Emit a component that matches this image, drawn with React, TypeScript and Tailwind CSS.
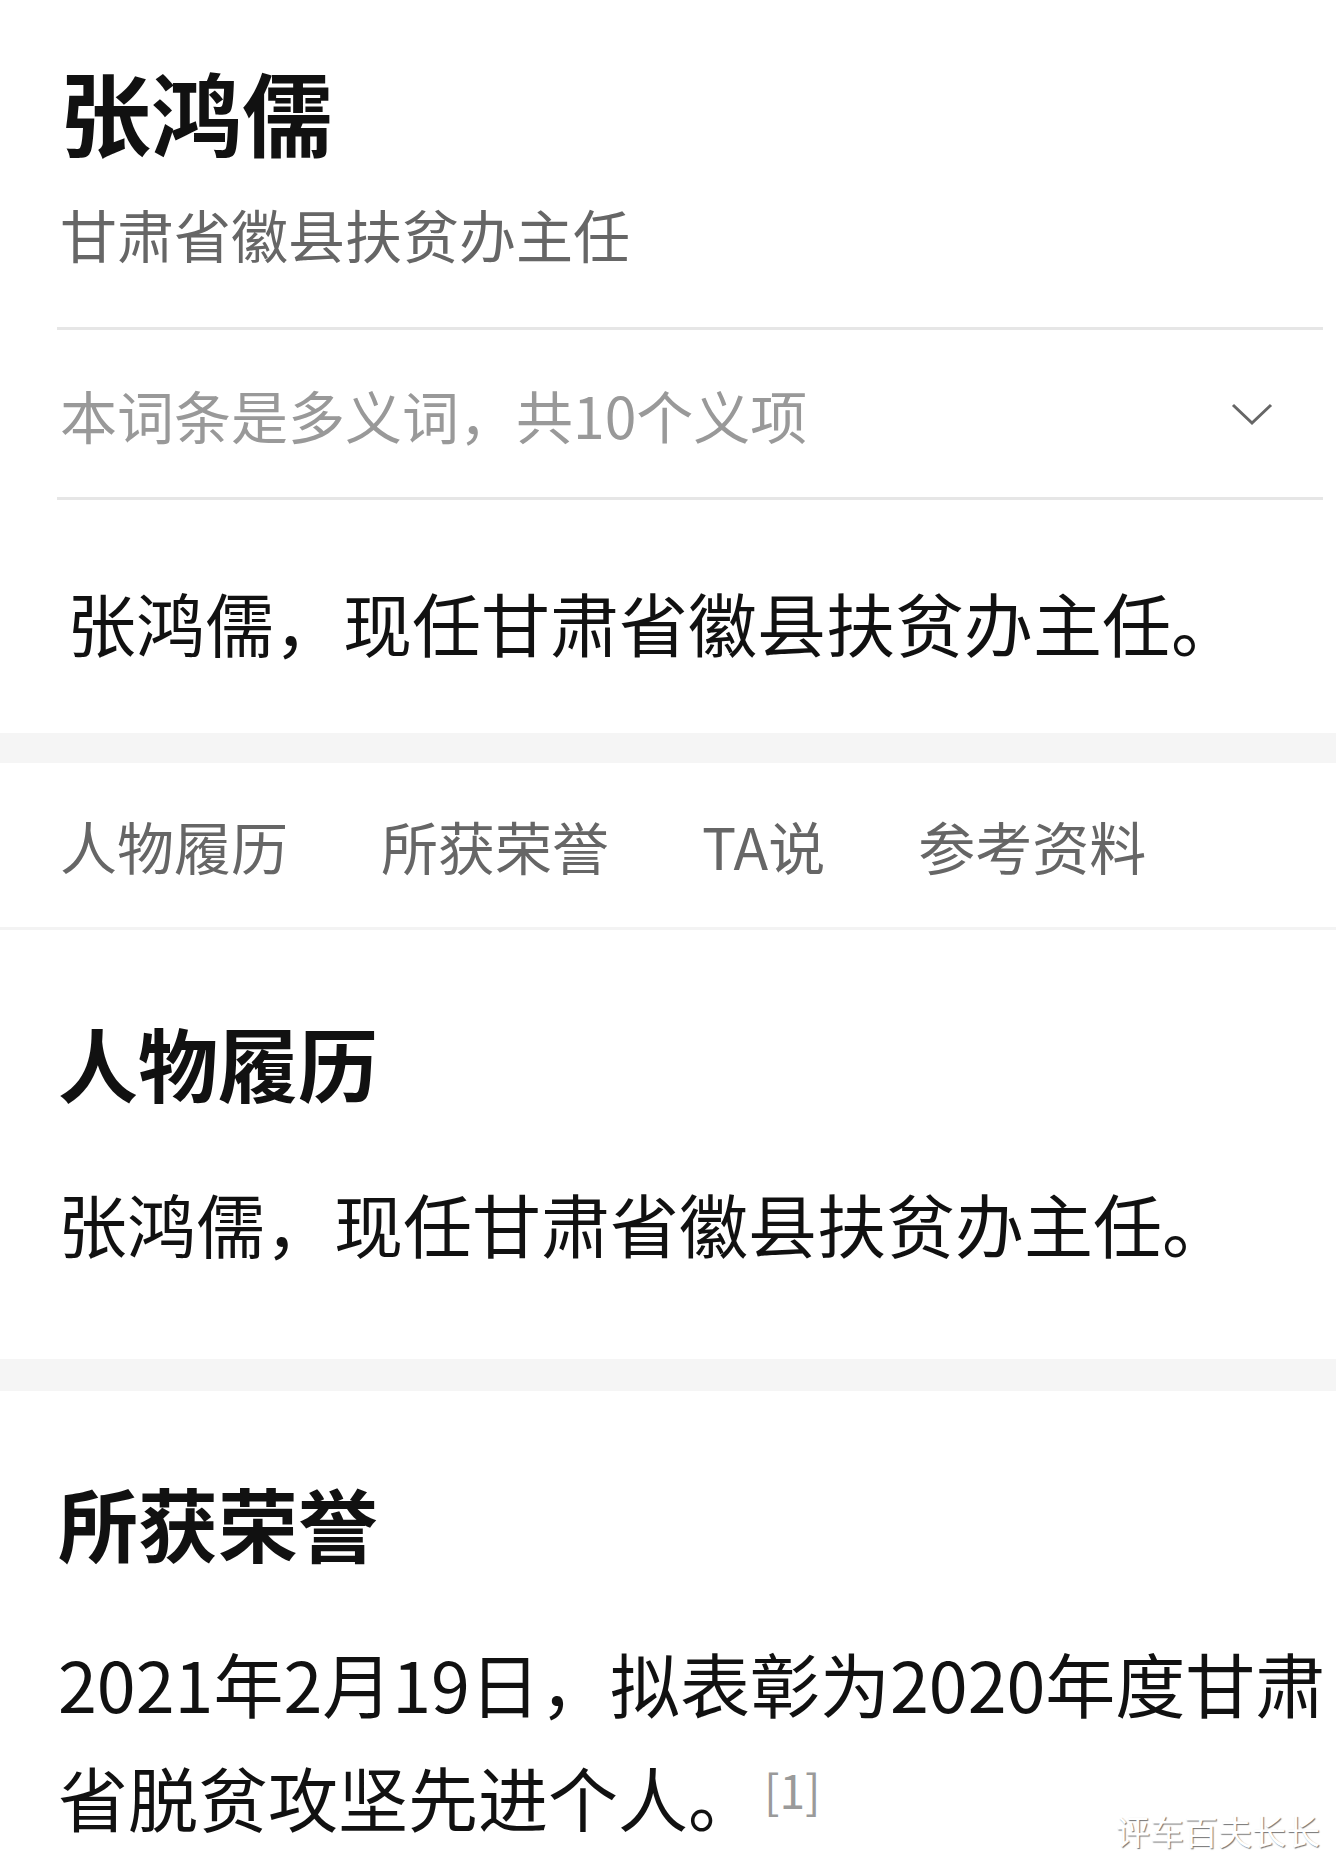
const FONT = "font-['Noto_Sans_CJK_SC','Noto_Sans',sans-serif]";

const TABS = ["人物履历", "所获荣誉", "TA说", "参考资料"];

function Chevron() {
  return (
    <svg width="42" height="24" viewBox="0 0 42 24" fill="none" className="shrink-0">
      <path d="M2 3 L21 21 L40 3" stroke="#666" strokeWidth="3" strokeLinejoin="miter" />
    </svg>
  );
}

function Band({ h }: { h: string }) {
  return <div className={`w-full bg-[#f5f5f5] ${h}`} />;
}

export default function App() {
  return (
    <div className={`relative w-[1336px] h-[1869px] overflow-hidden bg-white text-black ${FONT}`}>
      {/* header */}
      <section className="pl-[57px] pr-[13px]">
        <h1 className="pt-[56px] pl-[3px] text-[91px] leading-[108px] font-bold text-[#111]">张鸿儒</h1>
        <p className="mt-[29px] pl-[3px] text-[57px] leading-[80px] text-[#666]">甘肃省徽县扶贫办主任</p>
        <div className="mt-[54px] h-[3px] bg-[#e6e6e6]" />
        <div className="h-[167px] flex items-center justify-between pl-[3px] pr-[50px]">
          <span className="text-[57px] leading-[80px] text-[#999]">本词条是多义词，共10个义项</span>
          <Chevron />
        </div>
        <div className="h-[3px] bg-[#e6e6e6]" />
        <p className="mt-[72px] pb-[61px] pl-[10px] text-[69px] leading-[100px] text-[#111]">
          张鸿儒，现任甘肃省徽县扶贫办主任。
        </p>
      </section>

      <Band h="h-[30px]" />

      {/* tabs */}
      <nav className="h-[167px] flex items-center gap-[93px] pl-[60px] border-b-[3px] border-[#f3f3f3]">
        {TABS.map((t) => (
          <span key={t} className="text-[57px] leading-[80px] text-[#666]">
            {t}
          </span>
        ))}
      </nav>

      {/* 人物履历 */}
      <section className="pl-[58px] pr-[13px] pt-[81px] pb-[86px]">
        <h2 className="text-[80px] leading-[100px] font-bold text-[#111]">人物履历</h2>
        <p className="mt-[62px] text-[69px] leading-[100px] text-[#111]">张鸿儒，现任甘肃省徽县扶贫办主任。</p>
      </section>

      <Band h="h-[32px]" />

      {/* 所获荣誉 */}
      <section className="pl-[58px] pr-[10px] pt-[80px]">
        <h2 className="text-[80px] leading-[100px] font-bold text-[#111]">所获荣誉</h2>
        <p className="mt-[58px] text-[70px] leading-[107px] text-[#111]">
          <span className="block whitespace-nowrap">2021年2月19日，拟表彰为2020年度甘肃</span>
          <span className="block whitespace-nowrap">
            省脱贫攻坚先进个人。
            <span className="ml-[6px] text-[46px] text-[#9a9a9a] align-[18px]">[1]</span>
          </span>
        </p>
      </section>

      {/* watermark */}
      <div className="absolute right-[16px] bottom-[18px] text-[34px] leading-[40px] text-white [text-shadow:1px_1px_1px_rgba(0,0,0,0.55)]">
        评车百夫长长
      </div>
    </div>
  );
}
